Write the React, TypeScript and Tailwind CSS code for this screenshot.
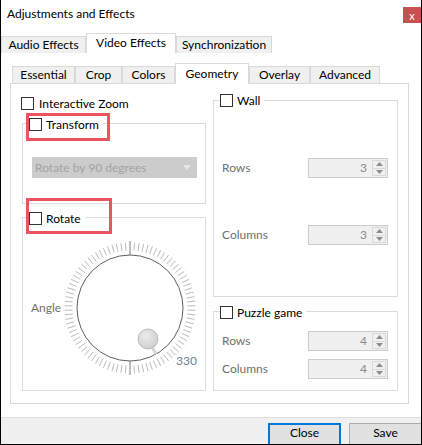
import React from 'react';

function Check() {
  return <span className="block h-[13px] w-[13px] shrink-0 border border-[#333333] bg-white" />;
}

function Legend({ label, className }: { label: string; className: string }) {
  return (
    <div className={'flex h-[13px] w-fit items-center gap-[4px] bg-white pr-[4px] ' + className}>
      <Check />
      <span className="leading-[13px] text-black">{label}</span>
    </div>
  );
}

function Spin({ value }: { value: number }) {
  return (
    <div className="flex h-[20px] w-[80px] items-center border border-[#cccccc] bg-[#f0f0f0]">
      <span className="flex-1 pr-[5px] text-right leading-[14px] text-[#8a8a8a]">{value}</span>
      <div className="mr-[1px] flex h-[16px] w-[14px] flex-col border border-[#dadada]">
        <div className="flex flex-1 items-center justify-center border-b border-[#dadada]">
          <svg width="7" height="4" viewBox="0 0 7 4"><path d="M0 4 L3.5 0 L7 4 Z" fill="#8c8c8c" /></svg>
        </div>
        <div className="flex flex-1 items-center justify-center">
          <svg width="7" height="4" viewBox="0 0 7 4"><path d="M0 0 L7 0 L3.5 4 Z" fill="#8c8c8c" /></svg>
        </div>
      </div>
    </div>
  );
}

function SpinRow({ label, value, className }: { label: string; value: number; className: string }) {
  return (
    <div className={'flex h-[20px] items-center justify-between pl-[8px] pr-[9px] ' + className}>
      <span className="text-[#707070]">{label}</span>
      <Spin value={value} />
    </div>
  );
}

function Dial() {
  const ticks = [];
  for (let i = 0; i < 90; i++) {
    const a = (i * 4 * Math.PI) / 180;
    const major = i === 0 || i === 45;
    const r1 = major ? 53 : 57.5;
    const r2 = major ? 67 : 65.5;
    ticks.push(
      <line
        key={i}
        x1={70 + r1 * Math.sin(a)}
        y1={70 - r1 * Math.cos(a)}
        x2={70 + r2 * Math.sin(a)}
        y2={70 - r2 * Math.cos(a)}
        stroke={major ? '#6e6e6e' : '#b2b2b2'}
        strokeWidth="0.9"
      />
    );
  }
  return (
    <div className="relative h-[140px] w-[140px]">
      <svg width="140" height="140" viewBox="0 0 140 140">
        <defs>
          <radialGradient id="knob" cx="40%" cy="35%" r="70%">
            <stop offset="0%" stopColor="#ececec" />
            <stop offset="100%" stopColor="#cdcdcd" />
          </radialGradient>
        </defs>
        {ticks}
        <circle cx="70" cy="70" r="53" fill="white" stroke="#5e5e5e" strokeWidth="1" />
        <line x1="92" y1="109" x2="96" y2="116" stroke="#d6d6d6" strokeWidth="3" />
        <circle cx="88" cy="101" r="10" fill="url(#knob)" stroke="#bcbcbc" strokeWidth="1" />
      </svg>
      <span className="absolute left-[116px] top-[116px] leading-[14px] text-[#6a8494]">330</span>
    </div>
  );
}

export default function App() {
  const mainTabs = [
    { label: 'Audio Effects', w: 'w-[85px]', active: false },
    { label: 'Video Effects', w: 'w-[90px]', active: true },
    { label: 'Synchronization', w: 'w-[96px]', active: false },
  ];
  const subTabs = [
    { label: 'Essential', w: 'w-[63px]', active: false },
    { label: 'Crop', w: 'w-[47px]', active: false },
    { label: 'Colors', w: 'w-[53px]', active: false },
    { label: 'Geometry', w: 'w-[74px]', active: true },
    { label: 'Overlay', w: 'w-[61px]', active: false },
    { label: 'Advanced', w: 'w-[70px]', active: false },
  ];

  return (
    <div className="relative flex h-[445px] w-[422px] flex-col overflow-hidden border-x border-b border-black bg-white font-['Lato',_'Liberation_Sans',_sans-serif] text-[12px] text-black">
      {/* title bar */}
      <div className="flex h-[33px] items-start justify-between pl-[6px]">
        <span className="pt-[7px] leading-[14px]">Adjustments and Effects</span>
        <div className="mt-[7px] flex h-[16px] w-[18px] items-center justify-center bg-[#c75050] text-[11px] leading-none text-white">
          x
        </div>
      </div>

      {/* main tabs */}
      <div className="flex h-[20px] items-end">
        {mainTabs.map((t) =>
          t.active ? (
            <div key={t.label} className={t.w + ' flex h-[20px] items-center justify-center border-x border-t border-[#d9d9d9] bg-white pb-[1px]'}>
              {t.label}
            </div>
          ) : (
            <div key={t.label} className={t.w + ' flex h-[17px] items-center justify-center border-x border-t border-[#d9d9d9] bg-[#f0f0f0]'}>
              {t.label}
            </div>
          )
        )}
      </div>

      {/* sub tabs */}
      <div className="ml-[11px] mt-[10px] flex h-[20px] items-end">
        {subTabs.map((t) =>
          t.active ? (
            <div key={t.label} className={t.w + ' relative z-10 -mb-px flex h-[21px] items-center justify-center border-x border-t border-[#d9d9d9] bg-white pb-[1px]'}>
              {t.label}
            </div>
          ) : (
            <div key={t.label} className={t.w + ' flex h-[17px] items-center justify-center border-x border-t border-[#d9d9d9] bg-[#f0f0f0]'}>
              {t.label}
            </div>
          )
        )}
      </div>

      {/* pane */}
      <div className="ml-[9px] flex h-[321px] w-[399px] border border-[#d9d9d9] pl-[11px]">
        {/* left column */}
        <div className="flex w-[184px] flex-col pt-[13px]">
          <div className="-ml-px flex h-[13px] items-center gap-[5px]">
            <Check />
            <span className="leading-[13px]">Interactive Zoom</span>
          </div>

          <div className="mt-[13px] h-[81px] border border-[#dcdcdc]">
            <Legend label="Transform" className="-mt-[6px] ml-[6px]" />
            <div className="ml-[9px] mt-[26px] flex h-[21px] w-[165px] items-center justify-between bg-[#cccccc] pl-[3px] pr-[6px]">
              <span className="text-[#a3a3a3]">Rotate by 90 degrees</span>
              <svg width="8" height="5" viewBox="0 0 8 5"><path d="M0 0 L8 0 L4 5 Z" fill="#e6e6e6" /></svg>
            </div>
          </div>

          <div className="mt-[13px] h-[174px] border border-[#dcdcdc]">
            <Legend label="Rotate" className="-mt-[6px] ml-[6px]" />
            <div className="mt-[13px] flex items-center pl-[8px]">
              <span className="w-[29px] text-[#707070]">Angle</span>
              <Dial />
            </div>
          </div>
        </div>

        {/* right column */}
        <div className="ml-[7px] flex w-[185px] flex-col pt-[16px]">
          <div className="h-[197px] border border-[#dcdcdc]">
            <Legend label="Wall" className="-mt-[7px] ml-[6px]" />
            <SpinRow label="Rows" value={3} className="mt-[51px]" />
            <SpinRow label="Columns" value={3} className="mt-[47px]" />
          </div>

          <div className="mt-[14px] h-[80px] border border-[#dcdcdc]">
            <Legend label="Puzzle game" className="-mt-[6px] ml-[6px]" />
            <SpinRow label="Rows" value={4} className="mt-[12px]" />
            <SpinRow label="Columns" value={4} className="mt-[8px]" />
          </div>
        </div>
      </div>

      {/* footer */}
      <div className="mt-[13px] flex h-[27px] gap-[8px] overflow-hidden border-t border-[#dfdfdf] bg-[#f0f0f0] pl-[267px] pt-[5px]">
        <div className="h-[23px] w-[73px] shrink-0 border-2 border-[#0078d7] bg-[#e1e1e1] pt-[1px] text-center leading-[14px]">
          Close
        </div>
        <div className="h-[23px] w-[73px] shrink-0 border border-[#adadad] bg-[#e1e1e1] pt-[2px] text-center leading-[14px]">
          Save
        </div>
      </div>

      {/* annotation highlights */}
      <div className="pointer-events-none absolute left-[25px] top-[113px] h-[28px] w-[84px] border-[3px] border-[#ee5360]" />
      <div className="pointer-events-none absolute left-[25px] top-[198px] h-[36px] w-[86px] border-[3px] border-[#ee5360]" />
    </div>
  );
}
